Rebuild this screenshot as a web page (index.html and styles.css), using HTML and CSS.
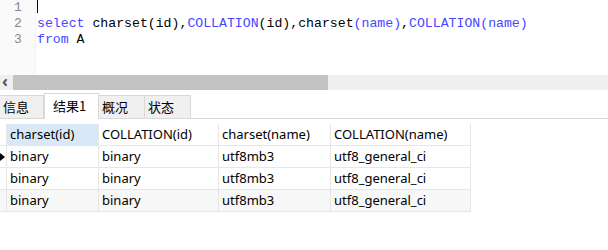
FILE: index.html
```html
<!DOCTYPE html>
<html lang="zh-CN">
<head>
    <meta charset="UTF-8">
    <title>查询</title>
    <link rel="stylesheet" href="styles.css">
</head>
<body>

    <div class="editor">
        <div class="gutter">
            <div class="ln">1</div>
            <div class="ln">2</div>
            <div class="ln">3</div>
        </div>
        <div class="code">
            <div class="line"><span class="caret"></span></div>
            <div class="line"><span class="kw">select</span> charset(id),<span class="kw">COLLATION</span>(id),charset<span class="kw">(name)</span>,<span class="kw">COLLATION</span><span class="kw">(name)</span></div>
            <div class="line"><span class="kw">from</span> A</div>
        </div>
    </div>

    <div class="hscroll">
        <div class="arrow">&#8249;</div>
        <div class="thumb"></div>
    </div>

    <div class="tabs">
        <div class="tab">信息</div>
        <div class="tab active">结果1</div>
        <div class="tab">概况</div>
        <div class="tab">状态</div>
    </div>

    <table class="grid">
        <tr class="head">
            <td class="ind"></td>
            <td class="c1 sel">charset(id)</td>
            <td class="c2">COLLATION(id)</td>
            <td class="c3">charset(name)</td>
            <td class="c4">COLLATION(name)</td>
        </tr>
        <tr>
            <td class="ind"><span class="mark"></span></td>
            <td>binary</td>
            <td>binary</td>
            <td>utf8mb3</td>
            <td>utf8_general_ci</td>
        </tr>
        <tr>
            <td class="ind"></td>
            <td>binary</td>
            <td>binary</td>
            <td>utf8mb3</td>
            <td>utf8_general_ci</td>
        </tr>
        <tr class="alt">
            <td class="ind"></td>
            <td>binary</td>
            <td>binary</td>
            <td>utf8mb3</td>
            <td>utf8_general_ci</td>
        </tr>
    </table>

</body>
</html>
```

FILE: styles.css
```css
body {
    margin: 0;
    padding: 0;
    background: white;
    font-family: "Noto Sans", "Noto Sans CJK SC", sans-serif;
    font-size: 13px;
    color: #000;
}

.editor {
    display: flex;
    height: 75px;
}

.gutter {
    width: 35px;
    background: #fafafa;
    border-right: 1px solid #f3f3f3;
    font-family: "Liberation Mono", monospace;
    font-size: 13px;
    color: #888;
}

.ln {
    height: 16px;
    line-height: 16px;
    padding-left: 14px;
}

.code {
    padding-left: 1px;
    font-family: "Liberation Mono", monospace;
    font-size: 13.2px;
    color: #000;
}

.line {
    height: 16px;
    line-height: 16px;
    white-space: pre;
}

.kw {
    color: #4646ff;
}

.caret {
    display: inline-block;
    width: 1px;
    height: 13px;
    background: #000;
    vertical-align: top;
}

.hscroll {
    display: flex;
    height: 15px;
    background: #efefef;
}

.arrow {
    width: 13px;
    font-size: 16px;
    line-height: 13px;
    font-weight: bold;
    color: #555;
    padding-left: 2px;
    box-sizing: border-box;
}

.thumb {
    width: 315px;
    background: #c2c2c2;
}

.tabs {
    display: flex;
    align-items: flex-end;
    margin-top: 4px;
    height: 24px;
    border-bottom: 1px solid #d9d9d9;
    font-family: "Noto Sans CJK SC", sans-serif;
}

.tab {
    height: 22px;
    line-height: 22px;
    padding: 0 3px;
    background: #f0f0f0;
    border-top: 1px solid #d9d9d9;
    border-right: 1px solid #d9d9d9;
    color: #000;
}

.tab:nth-child(1) { width: 37px; }
.tab:nth-child(3) { width: 39px; }
.tab:nth-child(4) { width: 39px; }

.tab.active {
    width: 42px;
    height: 25px;
    line-height: 24px;
    padding-left: 8px;
    background: white;
    border-left: 1px solid #d9d9d9;
    margin-bottom: -1px;
}

.grid {
    border-collapse: collapse;
    margin-top: 5px;
}

.grid td {
    height: 21px;
    padding: 0 3px;
    border: 1px solid #e6e6e6;
    white-space: nowrap;
    line-height: 21px;
}

.grid .head td {
    border-top: none;
}

.grid td.ind {
    width: 6px;
    padding: 0;
    border-left: none;
    position: relative;
}

.c1 { width: 85px; }
.c2 { width: 113px; }
.c3 { width: 105px; }
.c4 { width: 133px; }

.sel {
    background: #d9e8f7;
}

.alt td {
    background: #f7f7f7;
}

.mark {
    position: absolute;
    left: 0;
    top: 7px;
    width: 0;
    height: 0;
    border-top: 4px solid transparent;
    border-bottom: 4px solid transparent;
    border-left: 5px solid #000;
}
```
